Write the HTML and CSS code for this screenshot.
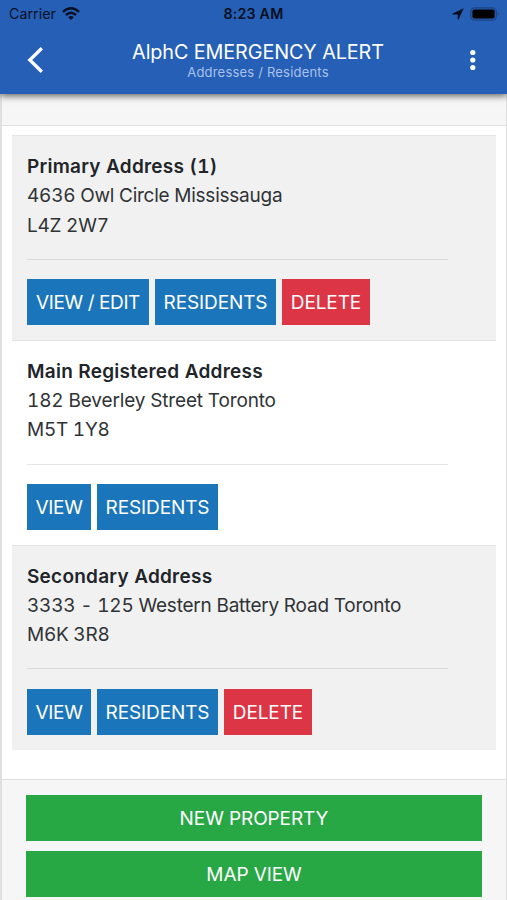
FILE: index.html
```html
<!DOCTYPE html>
<html lang="en">
<head>
<meta charset="utf-8">
<title>AlphC EMERGENCY ALERT</title>
<link rel="stylesheet" href="styles.css">
</head>
<body>
<header class="top">
  <div class="status">
    <div class="carrier"><span>Carrier</span>
      <svg width="18" height="13" viewBox="0 0 18 13"><g fill="none" stroke="#071022" stroke-width="2.4"><path d="M.9 4.8Q9-2.2 17.1 4.8"/><path d="M3.9 8Q9 3.6 14.1 8"/></g><path d="M6.2 10.2Q9 7.9 11.8 10.2L9 13Z" fill="#071022"/></svg>
    </div>
    <div class="time">8:23 AM</div>
    <div class="power">
      <svg width="12" height="12" viewBox="0 0 12 12"><path d="M11.7.3L.2 5.7Q.3 6.4 1 6.4H5.7V11.2Q6.3 12 6.8 11Z" fill="#071022"/></svg>
      <svg width="30" height="14" viewBox="0 0 30 14"><rect x=".8" y=".8" width="25.4" height="12.4" rx="3.6" fill="none" stroke="#1d437f" stroke-width="1.2"/><rect x="2.4" y="2.5" width="22.2" height="9" rx="2" fill="#000"/><path d="M27.6 5Q29.8 7 27.6 9Z" fill="#1d437f"/></svg>
    </div>
  </div>
  <div class="bar">
    <svg class="back" width="18" height="28" viewBox="0 0 18 28"><path d="M16.8 2.2L4.8 14L16.8 25.8" fill="none" stroke="#fff" stroke-width="3.3"/></svg>
    <div class="titles">
      <h1>AlphC EMERGENCY ALERT</h1>
      <p>Addresses / Residents</p>
    </div>
    <svg class="more" width="6" height="22" viewBox="0 0 6 22"><g fill="#fff"><circle cx="2.8" cy="3.5" r="2.6"/><circle cx="2.8" cy="11" r="2.6"/><circle cx="2.8" cy="18.5" r="2.6"/></g></svg>
  </div>
</header>
<main class="card">
  <div class="card-header"></div>
  <div class="list">
    <section class="row primary">
      <h2>Primary Address (1)</h2>
      <p class="street">4636 Owl Circle Mississauga</p>
      <p>L4Z 2W7</p>
      <hr>
      <div class="actions"><button class="btn edit">VIEW / EDIT</button><button class="btn residents">RESIDENTS</button><button class="btn delete">DELETE</button></div>
    </section>
    <section class="row">
      <h2>Main Registered Address</h2>
      <p class="street">182 Beverley Street Toronto</p>
      <p>M5T 1Y8</p>
      <hr>
      <div class="actions"><button class="btn view">VIEW</button><button class="btn residents">RESIDENTS</button></div>
    </section>
    <section class="row secondary">
      <h2>Secondary Address</h2>
      <p class="street">3333 - 125 Western Battery Road Toronto</p>
      <p>M6K 3R8</p>
      <hr>
      <div class="actions"><button class="btn view">VIEW</button><button class="btn residents">RESIDENTS</button><button class="btn delete">DELETE</button></div>
    </section>
  </div>
  <footer>
    <button class="btn wide">NEW PROPERTY</button>
    <button class="btn wide">MAP VIEW</button>
  </footer>
</main>
</body>
</html>
```
FILE: styles.css
```css
* { box-sizing: border-box; }
body { margin: 0; height: 900px; overflow: hidden; background: #fff; color: #212529; font-family: Inter, "Liberation Sans", sans-serif; display: flex; flex-direction: column; }
h1, h2, p { margin: 0; }
svg { display: block; flex: none; }
.top { position: relative; flex: none; height: 94px; background: #265fb6; box-shadow: 0 2px 7px rgba(0,0,0,.6); }
.status { height: 27px; padding: 0 7px 0 9px; display: grid; grid-template-columns: 1fr auto 1fr; align-items: center; color: #071022; font-size: 14.2px; }
.carrier { display: flex; align-items: center; gap: 6px; letter-spacing: .05px; }
.time { font-weight: 600; letter-spacing: .2px; margin-right: 2px; }
.power { display: flex; align-items: center; justify-content: flex-end; gap: 6px; }
.bar { height: 65px; padding: 0 31px 0 25px; display: grid; grid-template-columns: 18px 1fr 6px; align-items: center; }
.titles { padding: 2px 0 0 3px; text-align: center; color: #fff; }
h1 { font-size: 19.8px; line-height: 24px; font-weight: 400; letter-spacing: -.1px; }
.titles p { font-size: 13px; line-height: 17px; color: #a9c2eb; letter-spacing: .2px; }
.card { flex: 1; border: solid #dfdfdf; border-width: 0 1px 0 2px; }
.card-header { height: 32px; background: #f6f6f6; border-bottom: 1px solid #dfdfdf; }
.list { padding: 9px 10px 29px; }
.row { height: 204.8px; padding: 16px 15px 0; border-top: 1px solid #e2e3e4; }
.row:last-child { height: 205.4px; }
.row:nth-child(odd) { background: #f1f1f1; }
.row h2, .row p { font-size: 19px; line-height: 29.3px; white-space: nowrap; font-variant-numeric: tabular-nums; }
.row h2 { font-weight: 600; letter-spacing: .24px; }
.row p { color: #303336; letter-spacing: -.25px; }
.row .street { letter-spacing: -.15px; }
.row.primary .street { letter-spacing: -.24px; }
.row.secondary .street { letter-spacing: -.22px; }
hr { width: 421px; height: 1px; margin: 19px 0 19.5px; border: 0; background: #d9dadb; }
.row:nth-child(2) hr { background: #e6e6e6; }
.actions { display: flex; gap: 6px; }
.btn { height: 46px; padding: 2px 0 0; border: 0; color: #fff; background: #1b75bb; font: 400 19px/44px Inter, "Liberation Sans", sans-serif; letter-spacing: -.1px; white-space: nowrap; }
.edit { width: 122px; letter-spacing: -.4px; }
.view { width: 64px; letter-spacing: -.3px; }
.residents { width: 121px; }
.delete { width: 88px; background: #dc3545; }
footer { height: 130px; padding: 15px 24px 0; border-top: 1px solid #dfdfdf; background: #f6f6f6; display: flex; flex-direction: column; gap: 10px; }
.wide { flex: none; background: #28a745; }
```
